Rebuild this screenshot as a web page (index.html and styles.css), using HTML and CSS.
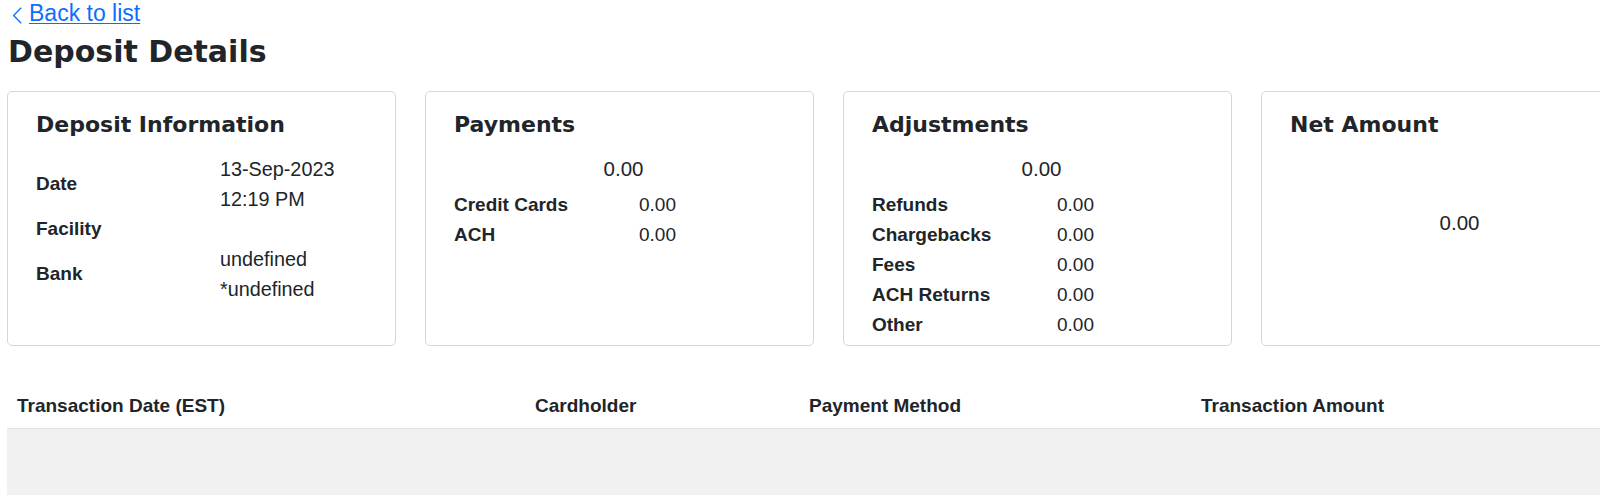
FILE: index.html
```html
<!DOCTYPE html>
<html lang="en">
<head>
<meta charset="utf-8">
<title>Deposit Details</title>
<link rel="stylesheet" href="styles.css">
</head>
<body>
<div class="page">
  <a class="back-link" href="#">
    <svg class="chev" width="11" height="17" viewBox="0 0 11 17" aria-hidden="true"><path d="M9.2 0.8 L1.6 8.5 L9.2 16.2" fill="none" stroke="#0d6efd" stroke-width="1.3"/></svg>
    <span class="back-text">Back to list</span>
  </a>
  <h1 class="page-title">Deposit Details</h1>

  <div class="cards">
    <section class="card">
      <h2 class="card-title">Deposit Information</h2>
      <div class="info-grid">
        <div class="info-label">Date</div>
        <div class="info-value">13-Sep-2023<br>12:19 PM</div>
        <div class="info-label">Facility</div>
        <div class="info-value"></div>
        <div class="info-label">Bank</div>
        <div class="info-value">undefined<br>*undefined</div>
      </div>
    </section>

    <section class="card">
      <h2 class="card-title">Payments</h2>
      <div class="total">0.00</div>
      <div class="kv">
        <div class="kv-label">Credit Cards</div><div class="kv-value">0.00</div>
        <div class="kv-label">ACH</div><div class="kv-value">0.00</div>
      </div>
    </section>

    <section class="card">
      <h2 class="card-title">Adjustments</h2>
      <div class="total">0.00</div>
      <div class="kv">
        <div class="kv-label">Refunds</div><div class="kv-value">0.00</div>
        <div class="kv-label">Chargebacks</div><div class="kv-value">0.00</div>
        <div class="kv-label">Fees</div><div class="kv-value">0.00</div>
        <div class="kv-label">ACH Returns</div><div class="kv-value">0.00</div>
        <div class="kv-label">Other</div><div class="kv-value">0.00</div>
      </div>
    </section>

    <section class="card card-net">
      <h2 class="card-title">Net Amount</h2>
      <div class="net-body"><div class="net-value">0.00</div></div>
    </section>
  </div>

  <div class="table">
    <div class="thead">
      <div class="th">Transaction Date (EST)</div>
      <div class="th">Cardholder</div>
      <div class="th">Payment Method</div>
      <div class="th">Transaction Amount</div>
    </div>
    <div class="tbody"></div>
  </div>
</div>
</body>
</html>
```

FILE: styles.css
```css
html, body {
  margin: 0;
  padding: 0;
  background: #ffffff;
  overflow: hidden;
}

body {
  font-family: "Liberation Sans", Arial, sans-serif;
  color: #212529;
  font-size: 19px;
}

.page {
  padding: 0 0 0 7px;
  width: 1700px;
}

.back-link {
  display: flex;
  align-items: center;
  gap: 6px;
  padding: 1px 0 0 5px;
  height: 25px;
  color: #0d6efd;
  text-decoration: none;
  width: max-content;
}

.chev {
  display: block;
  margin-top: 4px;
}

.back-text {
  font-size: 23px;
  line-height: 25px;
  text-decoration: underline;
  text-underline-offset: 2px;
  text-decoration-thickness: 1px;
}

.page-title {
  font-family: "DejaVu Sans", "Noto Sans", sans-serif;
  font-weight: 700;
  font-size: 30px;
  line-height: 38px;
  margin: 7px 0 0 1px;
  color: #212529;
}

.cards {
  display: flex;
  gap: 29px;
  margin-top: 20px;
}

.card {
  flex: 0 0 auto;
  width: 389px;
  height: 255px;
  box-sizing: border-box;
  border: 1px solid #d6d6d6;
  border-radius: 5px;
  padding: 18px 28px 0 28px;
  display: flex;
  flex-direction: column;
}

.card-title {
  font-family: "DejaVu Sans", "Noto Sans", sans-serif;
  font-weight: 700;
  font-size: 22px;
  line-height: 30px;
  margin: 0;
  color: #212529;
}

.info-grid {
  display: grid;
  grid-template-columns: 184px 1fr;
  align-items: center;
  margin-top: 14px;
  line-height: 30px;
}

.info-label,
.kv-label {
  font-weight: 700;
  font-size: 19px;
}

.info-value {
  font-size: 19.8px;
}

.kv-value {
  font-size: 19px;
}

.info-value:empty {
  height: 30px;
}

.total {
  font-size: 20.5px;
  line-height: 30px;
  text-align: center;
  margin-top: 14px;
  padding-left: 8px;
}

.kv {
  display: grid;
  grid-template-columns: 185px 1fr;
  line-height: 30px;
  margin-top: 6px;
}

.net-body {
  flex: 1;
  display: flex;
  align-items: center;
  justify-content: center;
  padding-bottom: 40px;
}

.net-value {
  font-size: 20.5px;
  padding-left: 8px;
}

.table {
  margin-top: 35px;
}

.thead {
  display: grid;
  grid-template-columns: 518px 274px 392px 1fr;
  border-bottom: 1px solid #dee2e6;
}

.th {
  font-weight: 700;
  font-size: 19px;
  line-height: 24px;
  padding: 13px 10px 10px 10px;
}

.tbody {
  background: #f1f1f1;
  height: 120px;
}
```
